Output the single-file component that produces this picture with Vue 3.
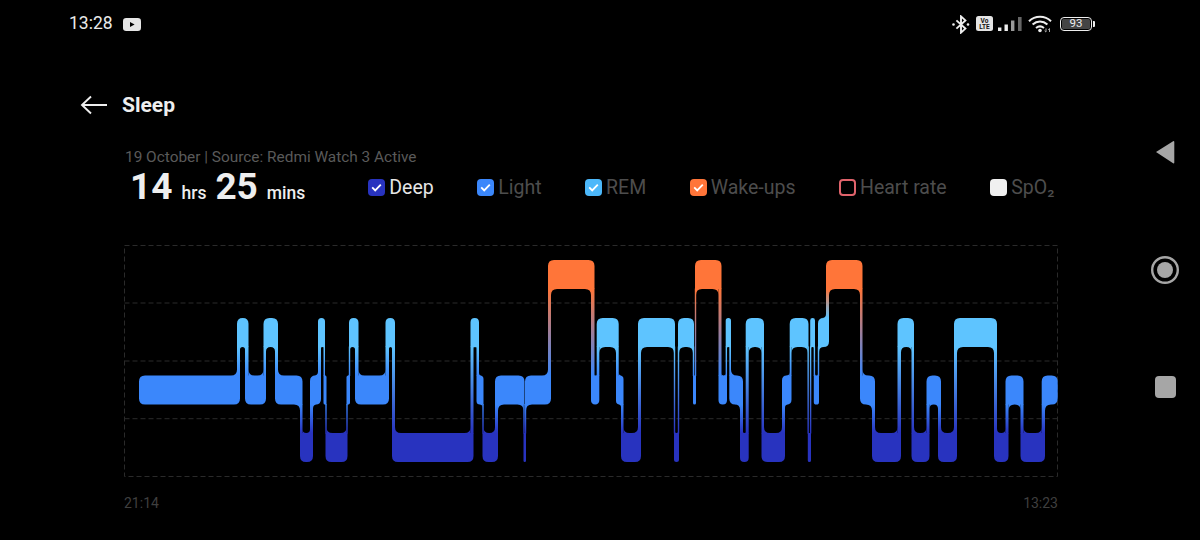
<script setup>
const tops = [267, 325, 382.5, 440]
const H = 29
const colors = ['#ff7539', '#5ec4ff', '#3b87fb', '#2833bf']
const raw = [
  [139, 240, 2], [237, 248.5, 1], [245, 266, 2], [263.5, 278, 1], [275, 302.5, 2], [300, 313, 3],
  [310, 321, 2], [318, 325, 1], [323.5, 326.5, 2], [325.5, 347.5, 3], [346.5, 350, 2], [349, 358.5, 1],
  [355, 389, 2], [385.5, 395, 1], [392, 473.5, 3], [470.5, 479, 1], [476.5, 483.5, 2], [482.5, 498, 3],
  [495, 524.5, 2], [523.5, 526, 3], [525, 551, 2], [548, 594.5, 0], [591, 599.3, 2], [596.7, 618.7, 1],
  [616, 623.5, 2], [621, 641, 3], [638, 675, 1], [674, 679, 3], [678, 694, 1], [693, 696, 2],
  [695, 721.5, 0], [718.5, 727, 2], [725.7, 731, 1], [729.3, 743, 2], [740, 748.7, 3], [745.7, 764, 1],
  [761.5, 785, 3], [782, 791.5, 2], [789.7, 808.5, 1], [807.8, 811, 3], [810.2, 815, 1], [813.8, 819, 2],
  [818, 829, 1], [826, 862.5, 0], [860, 875, 2], [872, 901, 3], [897.5, 914, 1], [911.5, 929.5, 3],
  [926.5, 941, 2], [938, 957, 3], [954, 997, 1], [994, 1008.5, 3], [1005.5, 1023.5, 2], [1020.5, 1045, 3],
  [1041.7, 1057.7, 2]
]
const segs = raw.map(([x0, x1, l]) => ({ x0, x1, l }))

function rectPath(x0, y0, x1, y1, tl, tr, br, bl) {
  return `M${x0 + tl} ${y0}H${x1 - tr}Q${x1} ${y0} ${x1} ${y0 + tr}V${y1 - br}Q${x1} ${y1} ${x1 - br} ${y1}H${x0 + bl}Q${x0} ${y1} ${x0} ${y1 - bl}V${y0 + tl}Q${x0} ${y0} ${x0 + tl} ${y0}Z`
}

const connectors = []
const bands = []
segs.forEach((s, i) => {
  const p = segs[i - 1]
  const n = segs[i + 1]
  const y0 = tops[s.l]
  const y1 = y0 + H
  const rad = Math.min(6, (s.x1 - s.x0) / 2)
  const lTop = p && p.l < s.l
  const lBot = p && p.l > s.l
  const rTop = n && n.l < s.l
  const rBot = n && n.l > s.l
  let d = rectPath(s.x0, y0, s.x1, y1, lTop ? 0 : rad, rTop ? 0 : rad, rBot ? 0 : rad, lBot ? 0 : rad)

  const edge = (onLeft, onRight, y, dir) => {
    const a = onLeft ? p.x1 : s.x0
    const b = onRight ? n.x0 : s.x1
    const r = Math.min(6, Math.max(b - a, 0) / 2)
    if (r <= 0) return ''
    let f = ''
    if (onLeft) f += `M${a} ${y + dir * r}Q${a} ${y} ${a + r} ${y}L${a} ${y}Z`
    if (onRight) f += `M${b} ${y + dir * r}Q${b} ${y} ${b - r} ${y}L${b} ${y}Z`
    return f
  }
  d += edge(lTop, rTop, y0, -1) + edge(lBot, rBot, y1, 1)
  bands.push({ d, fill: colors[s.l] })

  if (n) {
    const up = Math.min(s.l, n.l)
    const low = Math.max(s.l, n.l)
    let a = n.x0
    let b = s.x1
    if (b - a < 1.4) {
      const c = (a + b) / 2
      a = c - 0.7
      b = c + 0.7
    }
    connectors.push({
      x: a,
      y: tops[up] + H - 0.5,
      w: b - a,
      h: tops[low] - tops[up] - H + 1,
      fill: `url(#g${up}${low})`
    })
  }
})

const gradients = [
  [0, 1], [0, 2], [1, 2], [1, 3], [2, 3]
].map(([a, b]) => ({
  id: `g${a}${b}`,
  y1: tops[a] + H,
  y2: tops[b],
  from: colors[a],
  to: colors[b]
}))

const legend = [
  { label: 'Deep', cls: 'deep', on: true },
  { label: 'Light', cls: 'light', on: true },
  { label: 'REM', cls: 'rem', on: true },
  { label: 'Wake-ups', cls: 'wake', on: true },
  { label: 'Heart rate', cls: 'heart', on: false },
  { label: 'SpO₂', cls: 'spo', on: false }
]
const gridY = [310, 368, 425.7]
</script>

<template>
  <div class="app">
    <main class="main">
      <header class="status">
        <span class="clock">13:28</span>
        <svg class="yt" width="18" height="13" viewBox="0 0 18 13">
          <rect width="18" height="13" rx="3.2" fill="#e6e6e6" />
          <path d="M7 4l4.6 2.5L7 9z" fill="#000" />
        </svg>
        <div class="status-right">
          <svg width="18" height="19" viewBox="0 0 18 19" class="bt">
            <path d="M4.4 5.4l9 8.2-4.4 4V1.4l4.4 4-9 8.2" fill="none" stroke="#eee" stroke-width="1.9" />
            <circle cx="1.5" cy="9.5" r="1.3" fill="#eee" />
            <circle cx="16" cy="9.5" r="1.3" fill="#eee" />
          </svg>
          <svg width="17" height="16" viewBox="0 0 17 16" class="lte">
            <rect width="17" height="15" rx="2.5" fill="#e4e4e4" />
            <text x="8.5" y="6.7" class="lte-t">Vo</text>
            <text x="8.5" y="13" class="lte-t">LTE</text>
          </svg>
          <svg width="24" height="16" viewBox="0 0 24 16" class="sig">
            <rect x="0" y="11.5" width="3.4" height="3.5" fill="#eee" />
            <rect x="6.5" y="8.5" width="3.4" height="6.5" fill="#eee" />
            <rect x="13" y="4.5" width="3.4" height="10.5" fill="#999" />
            <rect x="20" y="1" width="3.6" height="14" fill="#666" />
          </svg>
          <svg width="25" height="18" viewBox="0 0 25 18" class="wifi">
            <g fill="none" stroke="#eee" stroke-width="2">
              <path d="M1 6.2C7 .2 17 .2 23 6.2" />
              <path d="M4.6 9.6c4.4-4 10.4-4 14.8 0" />
              <path d="M8 13c2.5-2 5.5-2 8 0" />
            </g>
            <circle cx="12" cy="15.5" r="1.8" fill="#eee" />
            <path d="M18 13.5v3.5M16.6 15.8l1.4 1.4M21.5 17v-3.5M20.2 14.8l1.3-1.3" stroke="#aaa" stroke-width="1" fill="none" />
          </svg>
          <div class="battery">
            <span class="battery-body"><span class="battery-fill">93</span></span>
            <span class="battery-tip"></span>
          </div>
        </div>
      </header>

      <div class="title-row">
        <svg width="28" height="20" viewBox="0 0 28 20">
          <path d="M27 10H2M11 1.5L2 10l9 8.5" fill="none" stroke="#eee" stroke-width="1.9" />
        </svg>
        <h1 class="title">Sleep</h1>
      </div>

      <section class="content">
        <p class="source">19 October | Source: Redmi Watch 3 Active</p>
        <div class="summary-row">
          <div class="summary">
            <b class="num">14</b><span class="unit">hrs</span>
            <b class="num">25</b><span class="unit">mins</span>
          </div>
          <ul class="legend">
            <li v-for="item in legend" :key="item.label" class="legend-item" :class="item.cls">
              <span class="box">
                <svg v-if="item.on" width="11" height="9" viewBox="0 0 11 9">
                  <path d="M1.2 4.4l3 3L9.8 1.6" fill="none" stroke="#fff" stroke-width="1.8" />
                </svg>
              </span>
              <span class="legend-label">{{ item.label }}</span>
            </li>
          </ul>
        </div>

        <svg class="chart" width="942" height="240" viewBox="120 248 942 240">
          <defs>
            <linearGradient
              v-for="g in gradients"
              :id="g.id"
              :key="g.id"
              gradientUnits="userSpaceOnUse"
              x1="0"
              x2="0"
              :y1="g.y1"
              :y2="g.y2"
            >
              <stop offset="0" :stop-color="g.from" />
              <stop offset="1" :stop-color="g.to" />
            </linearGradient>
          </defs>
          <rect x="124.5" y="252.5" width="933" height="231" class="gridline" />
          <line v-for="y in gridY" :key="y" x1="124.5" x2="1057.5" :y1="y" :y2="y" class="gridline" />
          <rect
            v-for="(c, i) in connectors"
            :key="'c' + i"
            :x="c.x"
            :y="c.y"
            :width="c.w"
            :height="c.h"
            :fill="c.fill"
          />
          <path v-for="(b, i) in bands" :key="'b' + i" :d="b.d" :fill="b.fill" />
        </svg>

        <div class="times">
          <span>21:14</span>
          <span>13:23</span>
        </div>
      </section>
    </main>

    <nav class="nav">
      <svg width="20" height="24" viewBox="0 0 20 24">
        <path d="M18.5 1L1 12l17.5 11.5a1 1 0 0 0 .8-1V2a1 1 0 0 0-.8-1z" fill="#a6a6a6" />
      </svg>
      <svg width="28" height="28" viewBox="0 0 28 28">
        <circle cx="14" cy="14" r="12.8" fill="none" stroke="#a6a6a6" stroke-width="2.4" />
        <circle cx="14" cy="14" r="8" fill="#a6a6a6" />
      </svg>
      <span class="nav-square"></span>
    </nav>
  </div>
</template>

<style>
html,
body {
  margin: 0;
  background: #000;
}
</style>

<style scoped>
.app {
  width: 1200px;
  height: 540px;
  display: flex;
  background: #000;
  overflow: hidden;
  font-family: Roboto, "Liberation Sans", sans-serif;
}
.main {
  width: 1130px;
  display: flex;
  flex-direction: column;
}
.status {
  display: flex;
  align-items: center;
  height: 48px;
  padding-left: 69px;
  color: #eaeaea;
}
.clock {
  font-size: 17.5px;
  line-height: 1;
}
.yt {
  margin-left: 10px;
}
.status-right {
  margin-left: auto;
  margin-right: 35px;
  display: flex;
  align-items: center;
}
.bt {
  margin-right: 6px;
}
.lte {
  margin-right: 5px;
}
.lte-t {
  font-size: 6.5px;
  font-weight: 700;
  fill: #111;
  text-anchor: middle;
}
.sig {
  margin-right: 6px;
}
.wifi {
  margin-right: 7px;
}
.battery {
  display: flex;
  align-items: center;
  gap: 1px;
}
.battery-body {
  width: 32px;
  height: 14px;
  box-sizing: border-box;
  border: 1.5px solid #eee;
  border-radius: 4px;
  padding: 1px;
  display: flex;
}
.battery-fill {
  flex: 1;
  background: #444;
  border-radius: 1.5px;
  color: #eee;
  font-size: 11.5px;
  line-height: 9px;
  text-align: center;
}
.battery-tip {
  width: 2px;
  height: 6px;
  background: #eee;
  border-radius: 0 1px 1px 0;
}
.title-row {
  display: flex;
  align-items: center;
  gap: 14px;
  margin-top: 43px;
  margin-left: 80px;
  height: 28px;
}
.title {
  margin: 0;
  color: #eee;
  font-size: 21px;
  font-weight: 700;
  line-height: 28px;
}
.content {
  margin-left: 125px;
  display: flex;
  flex-direction: column;
}
.source {
  margin: 29px 0 0;
  color: #5a5a5a;
  font-size: 15.4px;
  line-height: 18px;
}
.summary-row {
  display: flex;
  align-items: center;
  margin-top: 4px;
  height: 34px;
}
.summary {
  display: flex;
  align-items: baseline;
  margin-left: 5px;
  color: #eee;
}
.num {
  font-size: 37px;
  font-weight: 700;
  line-height: 34px;
}
.unit {
  font-size: 17.5px;
  font-weight: 500;
  margin: 0 9px 0 9px;
}
.legend {
  display: flex;
  gap: 43.5px;
  list-style: none;
  margin: 0 0 0 54px;
  padding: 0;
}
.legend-item {
  display: flex;
  align-items: center;
  gap: 4px;
  font-size: 19.5px;
  color: #4d4d4d;
}
.legend-item.deep {
  color: #e6e6e6;
}
.box {
  width: 17px;
  height: 17px;
  box-sizing: border-box;
  border-radius: 4px;
  display: flex;
  align-items: center;
  justify-content: center;
}
.deep .box {
  background: #2833bf;
}
.light .box {
  background: #3b87fb;
}
.rem .box {
  background: #4cb8fa;
}
.wake .box {
  background: #ff7539;
}
.heart .box {
  border: 2px solid #e0636b;
}
.spo .box {
  background: #f0f0f0;
}
.chart {
  display: block;
  margin-top: 37px;
  margin-left: -5px;
}
.gridline {
  fill: none;
  stroke: #2a2a2a;
  stroke-width: 1;
  stroke-dasharray: 5 3;
}
.times {
  display: flex;
  justify-content: space-between;
  width: 934px;
  margin-top: 13px;
  margin-left: -1px;
  color: #3f3f3f;
  font-size: 14px;
  line-height: 18px;
}
.nav {
  width: 70px;
  display: flex;
  flex-direction: column;
  align-items: center;
  padding-top: 140px;
  box-sizing: border-box;
}
.nav svg:nth-child(2) {
  margin-top: 92px;
}
.nav-square {
  width: 21px;
  height: 22px;
  margin-top: 92px;
  border-radius: 4px;
  background: #a6a6a6;
}
</style>
